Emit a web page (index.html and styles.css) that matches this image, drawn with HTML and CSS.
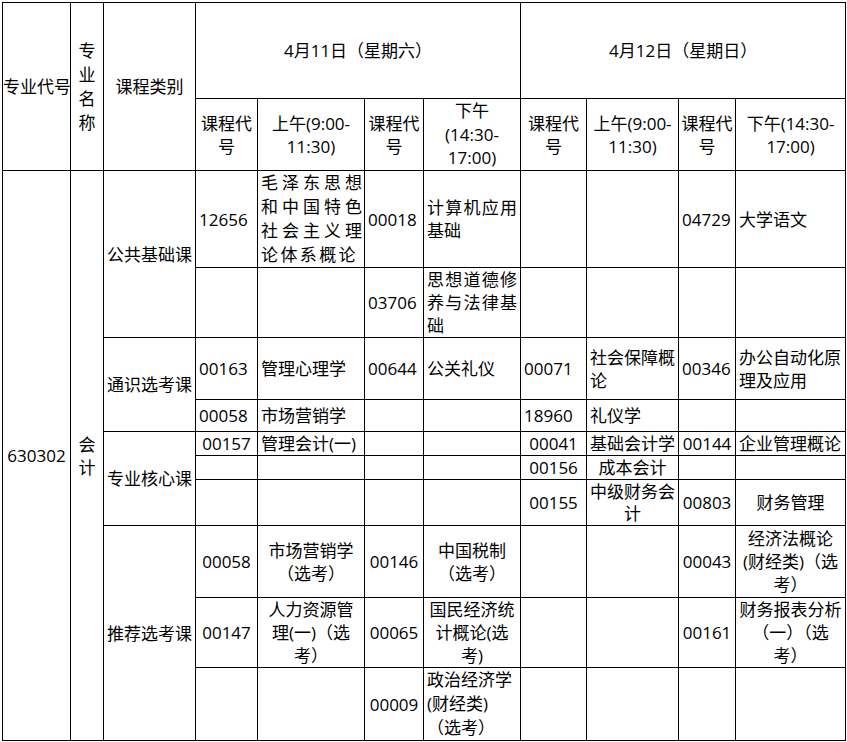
FILE: index.html
```html
<!DOCTYPE html>
<html lang="zh-CN">
<head>
<meta charset="utf-8">
<title>考试安排</title>
<link rel="stylesheet" href="styles.css">
</head>
<body>
<table class="sched">
  <colgroup>
    <col class="w68"><col class="w33"><col class="w92"><col class="w62"><col class="w107"><col class="w59"><col class="w97"><col class="w66"><col class="w92"><col class="w57"><col class="w110">
  </colgroup>
  <tr class="h96">
    <td rowspan="2" class="tight">专业代号</td>
    <td rowspan="2" class="lh24">专<br>业<br>名<br>称</td>
    <td rowspan="2">课程类别</td>
    <td colspan="4">4月11日（星期六）</td>
    <td colspan="4">4月12日（星期日）</td>
  </tr>
  <tr class="h72">
    <td>课程代<br>号</td>
    <td>上午(9:00-<br>11:30)</td>
    <td>课程代<br>号</td>
    <td class="lh235">下午<br>(14:30-<br>17:00)</td>
    <td>课程代<br>号</td>
    <td>上午(9:00-<br>11:30)</td>
    <td>课程代<br>号</td>
    <td>下午(14:30-<br>17:00)</td>
  </tr>
  <tr class="h97">
    <td rowspan="10">630302</td>
    <td rowspan="10">会<br>计</td>
    <td rowspan="2">公共基础课</td>
    <td class="l">12656</td>
    <td class="jall lh24">毛泽东思想<br>和中国特色<br>社会主义理<br><span class="tail">论体系概论</span></td>
    <td class="l">00018</td>
    <td class="j">计算机应用基础</td>
    <td></td>
    <td></td>
    <td class="l">04729</td>
    <td class="l">大学语文</td>
  </tr>
  <tr class="h70">
    <td></td>
    <td></td>
    <td class="l">03706</td>
    <td class="j">思想道德修养与法律基础</td>
    <td></td>
    <td></td>
    <td></td>
    <td></td>
  </tr>
  <tr class="h62">
    <td rowspan="2">通识选考课</td>
    <td class="l">00163</td>
    <td class="l">管理心理学</td>
    <td class="l">00644</td>
    <td class="l">公关礼仪</td>
    <td class="l">00071</td>
    <td class="j">社会保障概论</td>
    <td class="l">00346</td>
    <td class="l">办公自动化原<br>理及应用</td>
  </tr>
  <tr class="h32">
    <td class="l">00058</td>
    <td class="l">市场营销学</td>
    <td></td>
    <td></td>
    <td class="l">18960</td>
    <td class="l">礼仪学</td>
    <td></td>
    <td></td>
  </tr>
  <tr class="h24">
    <td rowspan="3">专业核心课</td>
    <td>00157</td>
    <td class="l">管理会计(一)</td>
    <td></td>
    <td></td>
    <td>00041</td>
    <td class="l">基础会计学</td>
    <td>00144</td>
    <td class="l">企业管理概论</td>
  </tr>
  <tr class="h24">
    <td></td>
    <td></td>
    <td></td>
    <td></td>
    <td>00156</td>
    <td>成本会计</td>
    <td></td>
    <td></td>
  </tr>
  <tr class="h46">
    <td></td>
    <td></td>
    <td></td>
    <td></td>
    <td>00155</td>
    <td class="lh22">中级财务会<br>计</td>
    <td>00803</td>
    <td>财务管理</td>
  </tr>
  <tr class="h72">
    <td rowspan="3">推荐选考课</td>
    <td>00058</td>
    <td>市场营销学<br>（选考）</td>
    <td>00146</td>
    <td>中国税制<br>（选考）</td>
    <td></td>
    <td></td>
    <td>00043</td>
    <td>经济法概论<br>(财经类)（选<br>考）</td>
  </tr>
  <tr class="h70">
    <td>00147</td>
    <td>人力资源管<br>理(一)（选<br>考）</td>
    <td>00065</td>
    <td>国民经济统<br>计概论(选<br>考)</td>
    <td></td>
    <td></td>
    <td>00161</td>
    <td>财务报表分析<br>（一）（选<br>考）</td>
  </tr>
  <tr class="h73">
    <td></td>
    <td></td>
    <td>00009</td>
    <td class="l lh24">政治经济学<br>(财经类)<br>（选考）</td>
    <td></td>
    <td></td>
    <td></td>
    <td></td>
  </tr>
</table>
</body>
</html>
```

FILE: styles.css
```css
html, body {
  margin: 0;
  padding: 0;
  background: #ffffff;
}

body {
  padding: 2px 0 0 2px;
  font-family: "Open Sans", "Noto Sans CJK SC", sans-serif;
  font-size: 17px;
  color: #000000;
}

.sched {
  border-collapse: collapse;
  table-layout: fixed;
  width: 843px;
}

.sched td {
  border: 1px solid #000000;
  padding: 0 2px;
  text-align: center;
  vertical-align: middle;
  line-height: 23px;
  white-space: nowrap;
  overflow: visible;
}

.w68 { width: 68px; }
.w33 { width: 33px; }
.w92 { width: 92px; }
.w62 { width: 62px; }
.w107 { width: 107px; }
.w59 { width: 59px; }
.w97 { width: 97px; }
.w66 { width: 66px; }
.w57 { width: 57px; }
.w110 { width: 110px; }

.h96 { height: 96px; }
.h72 { height: 72px; }
.h97 { height: 97px; }
.h70 { height: 70px; }
.h62 { height: 62px; }
.h32 { height: 32px; }
.h24 { height: 24px; }
.h46 { height: 46px; }
.h73 { height: 73px; }

.sched td.tight {
  padding: 0;
  text-align: left;
}

.sched td.l {
  text-align: left;
  padding: 0 2px 0 3px;
}

.sched td.j {
  text-align: justify;
  white-space: normal;
  padding: 0 3px;
}

.sched td.jall {
  text-align: justify;
  text-align-last: justify;
  padding: 0 2px 0 3px;
}

.tail {
  display: inline-block;
  letter-spacing: 2.4px;
}

.sched td.lh24 { line-height: 24px; }
.sched td.lh235 { line-height: 23.5px; }
.sched td.lh22 { line-height: 22px; }
```
